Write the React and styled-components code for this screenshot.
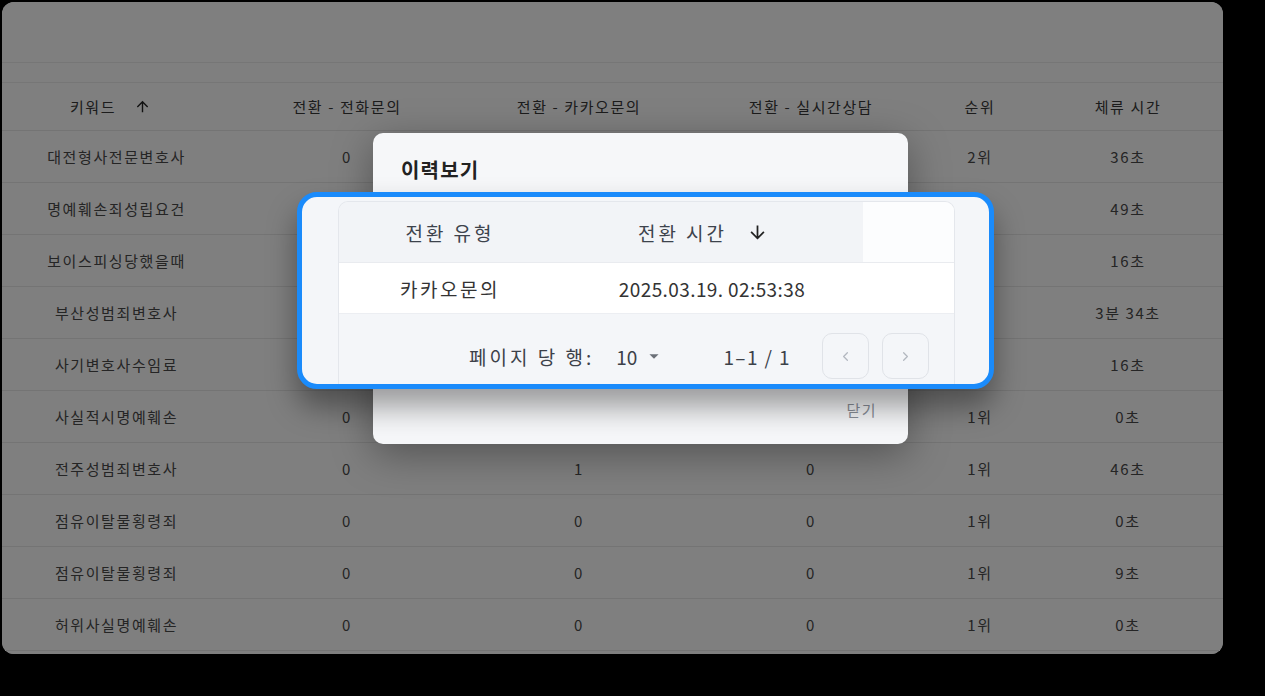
import React from "react";
import styled, { createGlobalStyle } from "styled-components";
import { MdArrowUpward, MdArrowDownward, MdArrowDropDown } from "react-icons/md";
import { ChevronLeft, ChevronRight } from "lucide-react";

// cells hidden behind the dialog are left empty
const rows = [
  ["대전형사전문변호사", "0", "", "", "2위", "36초"],
  ["명예훼손죄성립요건", "", "", "", "1위", "49초"],
  ["보이스피싱당했을때", "", "", "", "1위", "16초"],
  ["부산성범죄변호사", "", "", "", "1위", "3분 34초"],
  ["사기변호사수임료", "", "", "", "1위", "16초"],
  ["사실적시명예훼손", "0", "", "", "1위", "0초"],
  ["전주성범죄변호사", "0", "1", "0", "1위", "46초"],
  ["점유이탈물횡령죄", "0", "0", "0", "1위", "0초"],
  ["점유이탈물횡령죄", "0", "0", "0", "1위", "9초"],
  ["허위사실명예훼손", "0", "0", "0", "1위", "0초"],
];

const GlobalStyle = createGlobalStyle`
  html, body {
    margin: 0;
    background: #000;
  }
  body {
    font-family: "Noto Sans CJK KR", "Noto Sans", sans-serif;
  }
`;

const Stage = styled.div`
  position: relative;
  width: 1265px;
  height: 696px;
  padding: 2px;
  box-sizing: border-box;
`;

const Panel = styled.div`
  position: relative;
  width: 1221px;
  height: 652px;
  background: #fff;
  border-radius: 12px;
  overflow: hidden;
`;

const TopArea = styled.div`
  height: 60px;
`;

const FilterBand = styled.div`
  height: 19px;
  border-top: 1px solid #ececec;
  border-bottom: 1px solid #ececec;
`;

const Grid = styled.div`
  display: grid;
  grid-template-columns: 229px 232px 232px 232px 106px 1fr;
  height: ${(p) => (p.$head ? "47px" : "51px")};
  border-bottom: 1px solid #e8e8e8;
  align-items: center;
`;

const Cell = styled.div`
  display: flex;
  align-items: center;
  justify-content: center;
  gap: 18px;
  font-size: 15px;
  letter-spacing: 1.6px;
  color: ${(p) => (p.$head ? "#383838" : "#4a4a4a")};
  padding-right: ${(p) => (p.$shift ? "12px" : "0")};
`;

const Backdrop = styled.div`
  position: absolute;
  inset: 0;
  background: rgba(0, 0, 0, 0.5);
`;

const Modal = styled.div`
  position: absolute;
  left: 373px;
  top: 133px;
  width: 535px;
  height: 311px;
  background: #f6f7f9;
  border-radius: 10px;
  box-shadow: 0 10px 40px rgba(0, 0, 0, 0.35);
  display: flex;
  flex-direction: column;
  justify-content: space-between;
`;

const ModalTitle = styled.h2`
  margin: 0;
  padding: 24px 28px 0;
  font-size: 20px;
  line-height: 26px;
  letter-spacing: 1.2px;
  font-weight: 700;
  color: #222;
`;

const ModalFooter = styled.div`
  display: flex;
  justify-content: flex-end;
  padding: 0 29px 22px;
`;

const TextButton = styled.button`
  border: 0;
  background: none;
  font-family: inherit;
  font-size: 15px;
  letter-spacing: 1.5px;
  line-height: 24px;
  color: #8a8f98;
  padding: 0 2px;
`;

const Callout = styled.div`
  position: absolute;
  left: 297px;
  top: 192px;
  width: 697px;
  height: 197px;
  box-sizing: border-box;
  border: 5px solid #1a8bfb;
  border-radius: 20px;
  background: #f4f6f9;
  overflow: hidden;
  padding: 4px 34px 0 36px;
  box-shadow: 0 18px 30px rgba(0, 0, 0, 0.38);
`;

const Card = styled.div`
  border: 1px solid #e4e7ec;
  border-bottom: none;
  border-radius: 10px 10px 0 0;
  overflow: hidden;
  background: #f4f6f9;
`;

const CardRow = styled.div`
  display: grid;
  grid-template-columns: 222px 302px 1fr;
  height: ${(p) => (p.$head ? "60px" : "50px")};
  border-bottom: 1px solid ${(p) => (p.$head ? "#e9ebef" : "#eceef2")};
  background: ${(p) => (p.$head ? "#f2f4f7" : "#fff")};
`;

const CardCell = styled.div`
  display: flex;
  align-items: center;
  justify-content: center;
  gap: 20px;
  font-size: 19px;
  color: ${(p) => (p.$head ? "#3d434c" : "#333")};
  letter-spacing: ${(p) => p.$ls || "0"};
  background: ${(p) => (p.$filler ? "#fcfdfe" : "transparent")};
  padding-right: ${(p) => (p.$shift ? "18px" : "0")};
`;

const Pager = styled.div`
  display: flex;
  align-items: center;
  justify-content: flex-end;
  height: 84px;
  padding-right: 25px;
  font-size: 19px;
  color: #3c4149;
`;

const PagerLabel = styled.span`
  letter-spacing: 3px;
  margin-right: 22px;
`;

const PageSize = styled.span`
  display: flex;
  align-items: center;
  margin-right: 58px;
  svg {
    margin-left: 6px;
    color: #6b7078;
  }
`;

const Range = styled.span`
  letter-spacing: 1.4px;
  margin-right: 31px;
`;

const PageButton = styled.button`
  width: 47px;
  height: 46px;
  display: flex;
  align-items: center;
  justify-content: center;
  border: 1px solid #e0e3e8;
  border-radius: 10px;
  background: transparent;
  color: #b3b8c0;
  padding: 0;
  & + & {
    margin-left: 13px;
  }
`;

export default function App() {
  return (
    <>
      <GlobalStyle />
      <Stage>
        <Panel>
          <TopArea />
          <FilterBand />
          <Grid $head>
            <Cell $head $shift>
              키워드 <MdArrowUpward size={17} color="#222" />
            </Cell>
            <Cell $head>전환 - 전화문의</Cell>
            <Cell $head>전환 - 카카오문의</Cell>
            <Cell $head>전환 - 실시간상담</Cell>
            <Cell $head>순위</Cell>
            <Cell $head>체류 시간</Cell>
          </Grid>
          {rows.map((r, i) => (
            <Grid key={i}>
              {r.map((v, j) => (
                <Cell key={j}>{v}</Cell>
              ))}
            </Grid>
          ))}
          <Backdrop />
        </Panel>

        <Modal>
          <ModalTitle>이력보기</ModalTitle>
          <ModalFooter>
            <TextButton>닫기</TextButton>
          </ModalFooter>
        </Modal>

        <Callout>
          <Card>
            <CardRow $head>
              <CardCell $head $ls="3px">전환 유형</CardCell>
              <CardCell $head $ls="3px" $shift>
                전환 시간 <MdArrowDownward size={21} color="#222" />
              </CardCell>
              <CardCell $filler />
            </CardRow>
            <CardRow>
              <CardCell $ls="2.5px">카카오문의</CardCell>
              <CardCell $ls="0.4px">2025.03.19. 02:53:38</CardCell>
              <CardCell />
            </CardRow>
            <Pager>
              <PagerLabel>페이지 당 행:</PagerLabel>
              <PageSize>
                10 <MdArrowDropDown size={22} />
              </PageSize>
              <Range>1–1 / 1</Range>
              <PageButton>
                <ChevronLeft size={15} strokeWidth={2} />
              </PageButton>
              <PageButton>
                <ChevronRight size={15} strokeWidth={2} />
              </PageButton>
            </Pager>
          </Card>
        </Callout>
      </Stage>
    </>
  );
}
